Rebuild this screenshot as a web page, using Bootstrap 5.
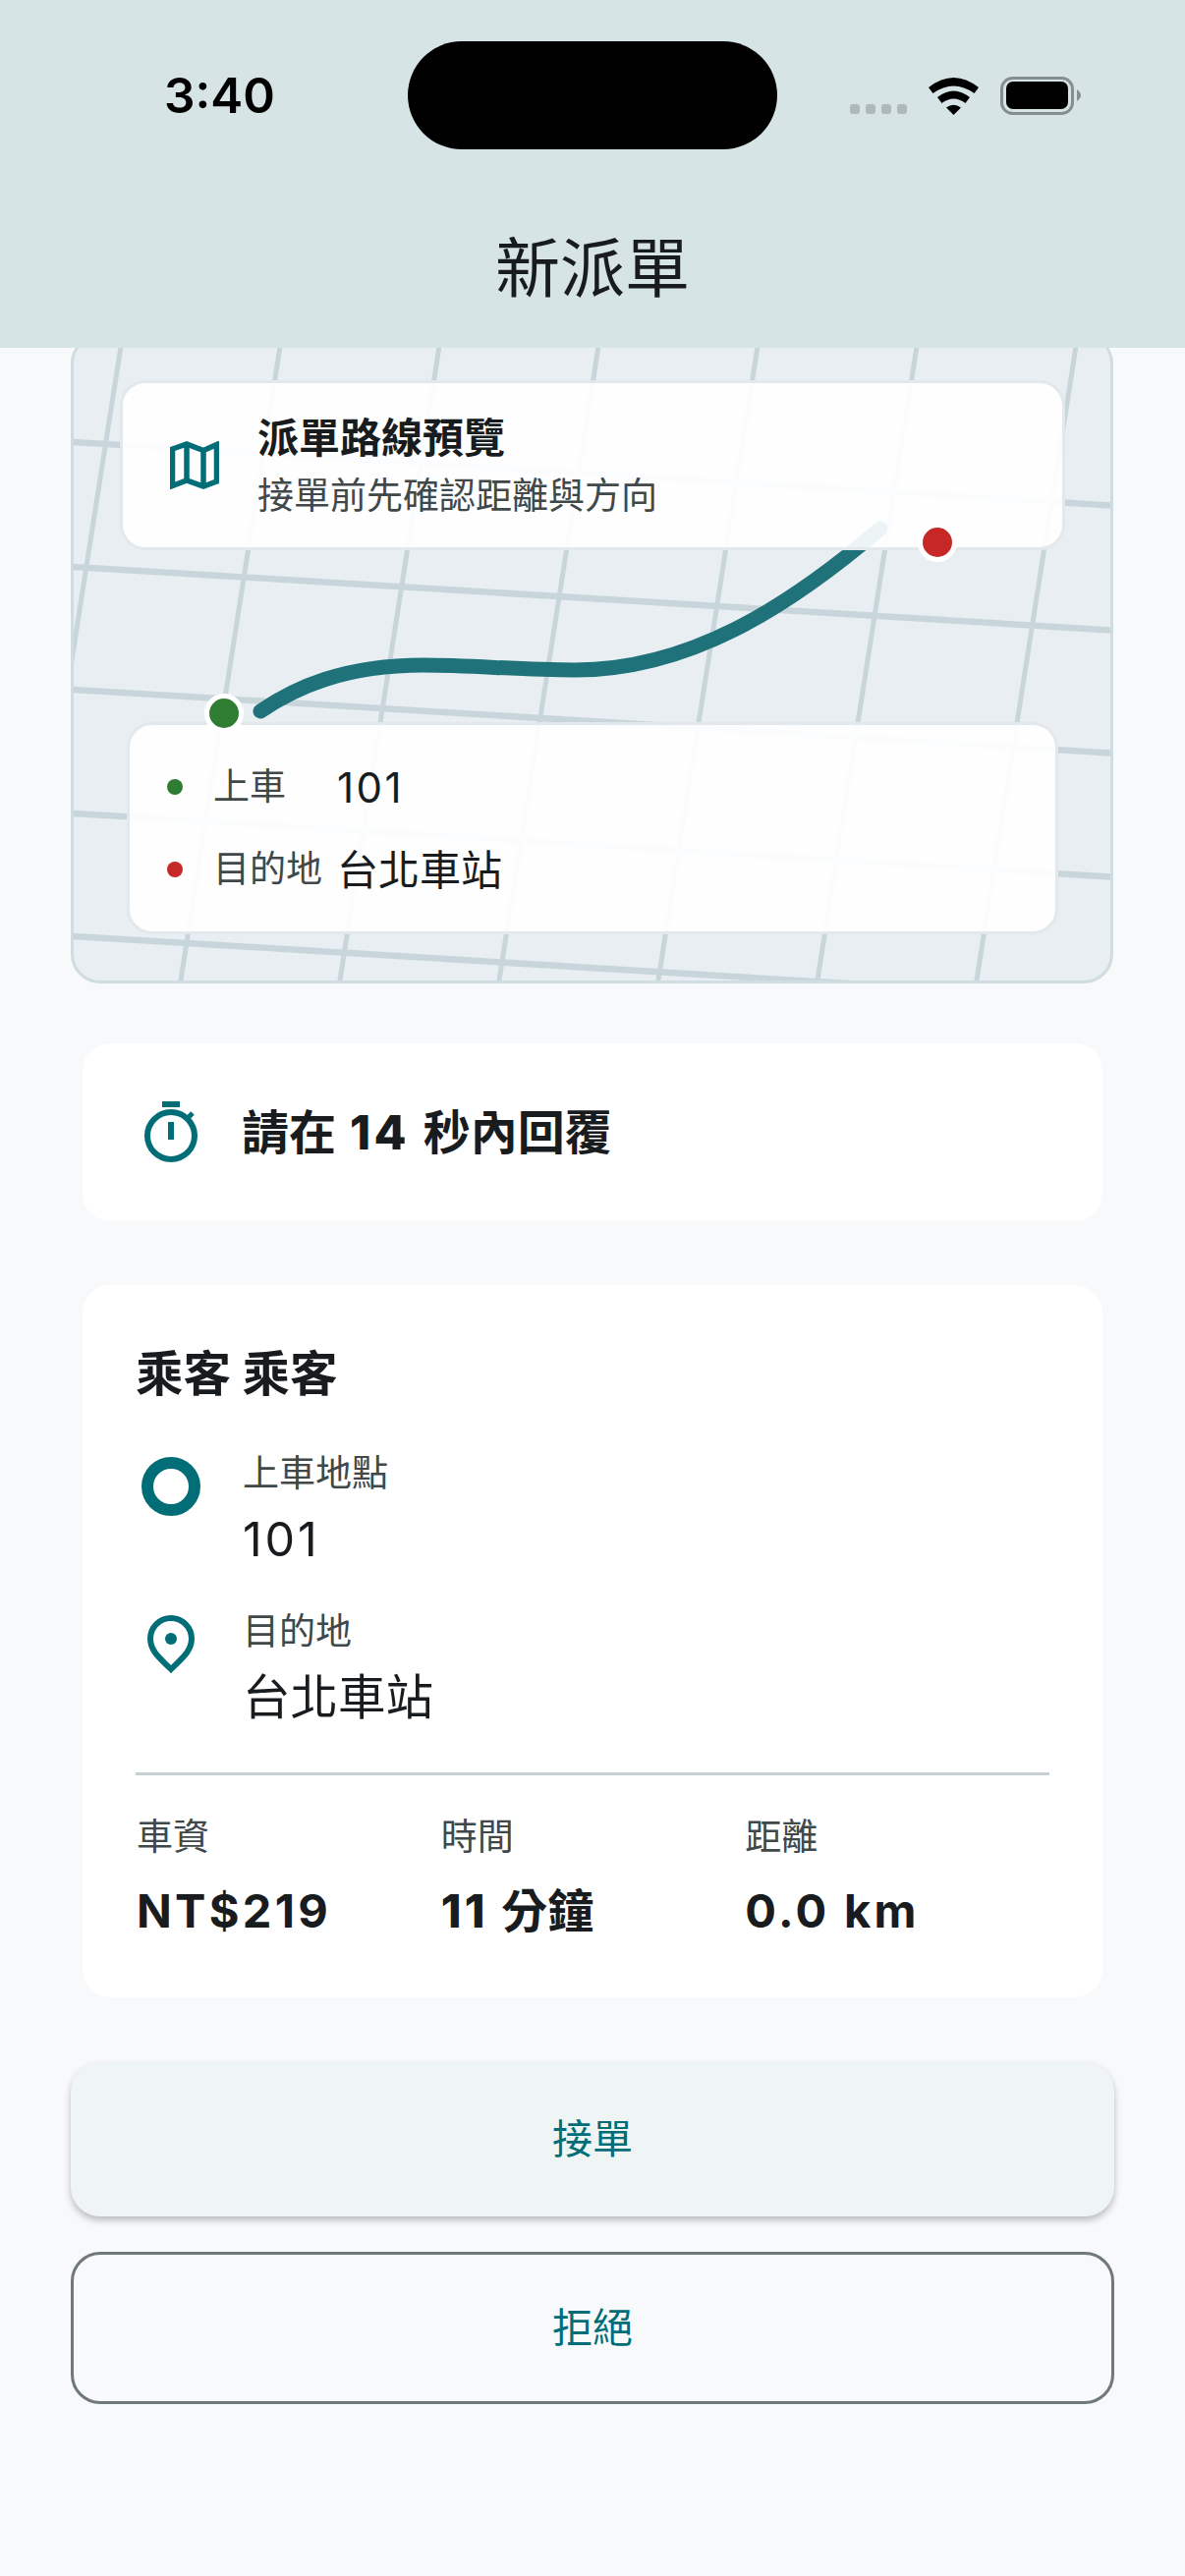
<!DOCTYPE html>
<html lang="zh-Hant">
<head>
  <meta charset="UTF-8">
  <title>新派單</title>
  <link href="https://cdn.jsdelivr.net/npm/bootstrap@5.3.0/dist/css/bootstrap.min.css" rel="stylesheet">
  <style>
    body { background: #f8f9fb; color: #191c1e; font-family: Inter, "Noto Sans CJK TC", sans-serif; width: 1206px; height: 2622px; overflow: hidden; }
    .top-bar { background: #d7e4e5; height: 354px; padding-top: 42px; z-index: 2; }
    .status-left { width: 415px; padding-left: 167px; font-size: 49.500px; font-weight: 600; line-height: 110px; color: #000; }
    .island { width: 376px; height: 110px; background: #000; border-radius: 55px; }
    .status-right { height: 75px; margin-left: 74px; gap: 22px; }
    .sig-dots { gap: 6px; padding-bottom: 1px; }
    .sig-dots i { display: block; width: 10px; height: 10px; border-radius: 3px; background: #adb9bb; }
    .page-title { font-size: 66px; font-weight: 400; line-height: 80px; margin: 81px 0 0; text-align: center; color: #191c1e; }
    .page-body { padding: 0 72px; margin-top: -14px; }
    .map-box { height: 661px; margin: 0 1px 0 0; padding: 44px 0 47px; background: #e8eef2; border: 3px solid #d0dde0; border-radius: 30px; overflow: hidden; }
    .map-lines { position: absolute; inset: 0; width: 100%; height: 100%; }
    .map-panel { background: rgba(255, 255, 255, .92); border: 3px solid #e2e8ec; border-radius: 26px; z-index: 1; }
    .panel-head { height: 173px; margin: 0 46px 0 47px; padding-left: 48px; gap: 39px; }
    .panel-text { padding-top: 4px; }
    .panel-title { font-size: 42px; font-weight: 700; line-height: 58px; }
    .panel-sub { font-size: 37px; line-height: 60px; color: #40484a; }
    .panel-route { height: 216px; margin: 0 53px 0 54px; padding: 21px 0 0 38px; }
    .route-row { height: 84px; }
    .route-dot { width: 16px; height: 16px; border-radius: 50%; margin-right: 31px; }
    .route-label { width: 126px; font-size: 37px; color: #40484a; }
    .route-value { font-size: 42px; }
    .num-wide { letter-spacing: .058em; }
    .num-heavy { font-weight: 800; letter-spacing: .07em; }
    .pin-mark { position: absolute; width: 40px; height: 40px; border-radius: 50%; border: 5px solid #fff; z-index: 2; }
    .pin-start { left: 133px; top: 363px; background: #2e7d32; }
    .pin-end { left: 859px; top: 189px; background: #c62828; }
    .dot-green { background: #2e7d32; }
    .dot-red { background: #c62828; }
    .info-box { border: 0; border-radius: 28px; background: #fff; margin: 0 12px; }
    .timer-box { height: 181px; margin-top: 61px; padding-left: 60px; gap: 42px; font-size: 48px; font-weight: 700; }
    .rider-box { height: 725px; margin-top: 65px; padding: 61px 54px 0 55px; }
    .rider-name { font-size: 48.500px; font-weight: 700; line-height: 60px; margin: 0 0 0 -1px; }
    .stop-row { margin-top: 46px; }
    .stop-row + .stop-row { margin-top: 39px; }
    .stop-icon { width: 72px; margin: 0 37px 0 -1px; }
    .field-label { font-size: 37px; line-height: 50px; color: #40484a; }
    .field-value { font-size: 48.500px; line-height: 60px; margin-top: 12px; }
    .rule-line { height: 3px; background: #c5d1d3; margin: 46px 0 0 -1px; }
    .stat-row { margin-top: 38px; }
    .stat-value { font-size: 47px; font-weight: 700; line-height: 60px; margin-top: 20px; }
    .action-btn { width: 100%; border-radius: 30px; font-size: 41px; color: #006d77; display: block; }
    .action-btn:hover { color: #006d77; }
    .btn-accept { height: 157px; margin-top: 66px; background: #eff5f5; border: 0; box-shadow: 0 4px 7px rgba(0, 0, 0, .25); }
    .btn-accept:hover { background: #eff5f5; }
    .btn-decline { height: 155px; margin-top: 36px; background: transparent; border: 3px solid #6f7978; }
  </style>
</head>
<body>

<header class="top-bar position-relative">
  <div class="d-flex">
    <div class="status-left">3:40</div>
    <div class="island"></div>
    <div class="status-right d-flex align-items-end">
      <div class="sig-dots d-flex"><i></i><i></i><i></i><i></i></div>
      <svg width="51" height="38" viewBox="0 0 51 38" fill="#000">
        <path d="M0 10Q25.5-10 51 10L46.5 16Q25.5 1 4.500 16Z"/>
        <path d="M9 20Q25.500 7 42 20L37.500 26Q25.500 17 13.500 26Z"/>
        <path d="M18 30.500Q25.500 25 33 30.500L25.500 38Z"/>
      </svg>
      <svg width="82" height="39" viewBox="0 0 82 39">
        <rect x="1.500" y="1.500" width="72" height="36" rx="11" fill="none" stroke="#868f90" stroke-width="3"/>
        <rect x="6" y="5" width="63" height="28" rx="7" fill="#000"/>
        <path d="M78 13 Q82 16 82 19 Q82 22 78 25Z" fill="#868f90"/>
      </svg>
    </div>
  </div>
  <h1 class="page-title">新派單</h1>
</header>

<main class="page-body">
  <section class="map-box position-relative d-flex flex-column justify-content-between">
    <svg class="map-lines" viewBox="75 343 1055 655" preserveAspectRatio="none">
      <g stroke="#c8d6dc" stroke-width="5" fill="none">
        <path d="M125 340L21 1004M287 340L183 1004M449 340L345 1004M611 340L507 1004M773 340L669 1004M935 340L831 1004M1097 340L993 1004"/>
      </g>
      <g stroke="#c8d6dc" stroke-width="6.500" fill="none">
        <path d="M60 449L1140 515M60 576L1140 642M60 701L1140 767M60 827L1140 893M60 952L1140 1018"/>
      </g>
      <path d="M265 724C300 700 350 677 431 677C480 677 530 682 585 682C700 682 800 620 896 538" fill="none" stroke="#1f717a" stroke-width="15" stroke-linecap="round"/>
    </svg>

    <div class="map-panel panel-head d-flex align-items-center">
      <svg width="50" height="49" viewBox="0 0 50 49" fill="none" stroke="#006d77" stroke-width="5.500">
        <path d="M2.500 8L17 3L34 9.500L47.500 3.500V41L34 46L17 40L2.500 45.500Z"/>
        <path d="M17 3V40M34 9.500V46"/>
      </svg>
      <div class="panel-text">
        <div class="panel-title">派單路線預覽</div>
        <div class="panel-sub">接單前先確認距離與方向</div>
      </div>
    </div>

    <div class="map-panel panel-route">
      <div class="route-row d-flex align-items-center">
        <span class="route-dot dot-green"></span>
        <span class="route-label">上車</span>
        <span class="route-value num-wide">101</span>
      </div>
      <div class="route-row d-flex align-items-center">
        <span class="route-dot dot-red"></span>
        <span class="route-label">目的地</span>
        <span class="route-value">台北車站</span>
      </div>
    </div>

    <span class="pin-mark pin-start"></span>
    <span class="pin-mark pin-end"></span>
  </section>

  <section class="card info-box timer-box d-flex flex-row align-items-center">
    <svg width="60" height="64" viewBox="0 0 60 64" fill="none" stroke="#006d77" stroke-width="6">
      <path d="M21 3H39"/>
      <circle cx="30" cy="35" r="24"/>
      <path d="M30 21V39" />
      <path d="M47 17L52 12" stroke-width="5"/>
    </svg>
    <span>請在<span class="num-heavy"> 14 </span>秒內回覆</span>
  </section>

  <section class="card info-box rider-box">
    <h2 class="rider-name">乘客 乘客</h2>

    <div class="stop-row d-flex">
      <div class="stop-icon d-flex justify-content-center">
        <svg class="mt-2" width="60" height="60" viewBox="0 0 60 60" fill="none" stroke="#006d77" stroke-width="12"><circle cx="30" cy="30" r="24"/></svg>
      </div>
      <div>
        <div class="field-label">上車地點</div>
        <div class="field-value num-wide">101</div>
      </div>
    </div>

    <div class="stop-row d-flex">
      <div class="stop-icon d-flex justify-content-center">
        <svg class="mt-2" width="48" height="60" viewBox="0 0 48 60" fill="none" stroke="#006d77" stroke-width="6">
          <path d="M24 55C14 45 3 37 3 24A21 21 0 0 1 45 24C45 37 34 45 24 55Z"/>
          <circle cx="24" cy="24" r="6" fill="#006d77" stroke="none"/>
        </svg>
      </div>
      <div>
        <div class="field-label">目的地</div>
        <div class="field-value">台北車站</div>
      </div>
    </div>

    <div class="rule-line"></div>

    <div class="stat-row row g-0">
      <div class="col-4">
        <div class="field-label">車資</div>
        <div class="stat-value num-heavy">NT$219</div>
      </div>
      <div class="col-4">
        <div class="field-label">時間</div>
        <div class="stat-value"><span class="num-heavy">11 </span>分鐘</div>
      </div>
      <div class="col-4">
        <div class="field-label">距離</div>
        <div class="stat-value num-heavy">0.0 km</div>
      </div>
    </div>
  </section>

  <button type="button" class="btn action-btn btn-accept">接單</button>
  <button type="button" class="btn action-btn btn-decline">拒絕</button>
</main>

<script src="https://cdn.jsdelivr.net/npm/bootstrap@5.3.0/dist/js/bootstrap.bundle.min.js"></script>
</body>
</html>
